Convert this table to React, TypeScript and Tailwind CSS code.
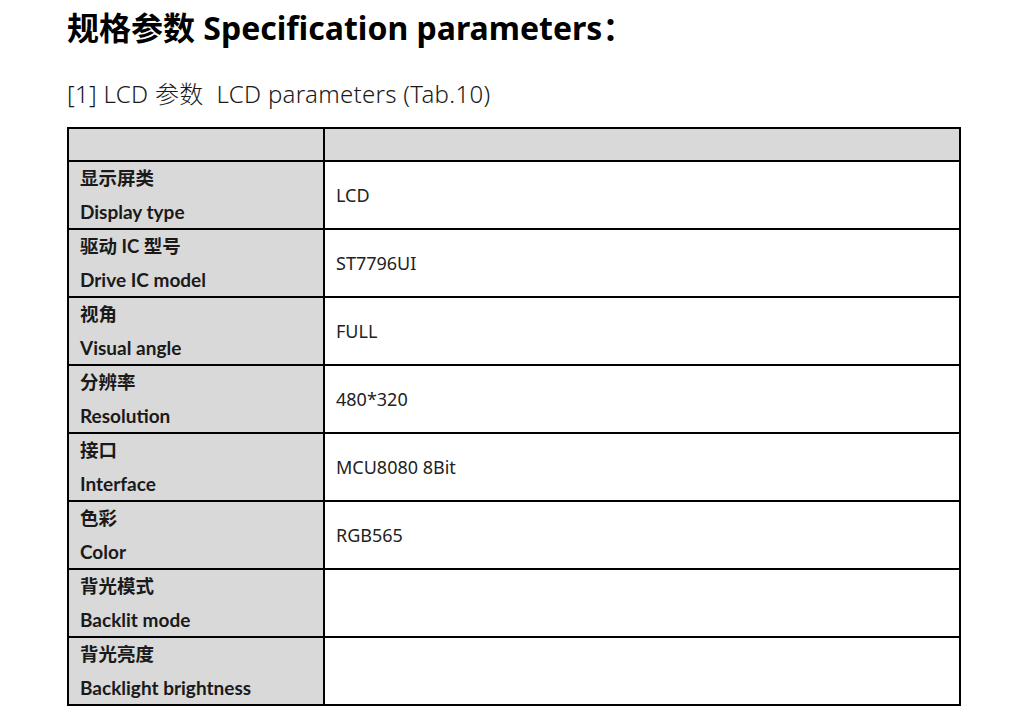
const rows = [
  { zh: "显示屏类", en: "Display type", value: "LCD" },
  { zh: "驱动 IC 型号", en: "Drive IC model", value: "ST7796UI" },
  { zh: "视角", en: "Visual angle", value: "FULL" },
  { zh: "分辨率", en: "Resolution", value: "480*320" },
  { zh: "接口", en: "Interface", value: "MCU8080 8Bit" },
  { zh: "色彩", en: "Color", value: "RGB565" },
  { zh: "背光模式", en: "Backlit mode", value: "" },
  { zh: "背光亮度", en: "Backlight brightness", value: "" },
]

export default function App() {
  return (
    <div className="min-h-screen bg-white pl-[67px] pt-[6px]" style={{ fontFamily: '"Noto Sans", "Noto Sans CJK SC", sans-serif' }}>
      <h1 className="text-[32px] font-bold leading-[44px] text-black">
        规格参数 Specification parameters：
      </h1>
      <p className="mt-[29px] text-[24px] font-light leading-[30px] tracking-[0.3px] text-[#1a1a1a]">
        [1] LCD 参数&nbsp; LCD parameters (Tab.10)
      </p>
      <table className="mt-[18px] w-[894px] border-collapse border-2 border-black">
        <tbody>
          <tr className="h-[33px]">
            <td className="w-[256px] border-2 border-black bg-[#d9d9d9]"></td>
            <td className="border-2 border-black bg-[#d9d9d9]"></td>
          </tr>
          {rows.map((r) => (
            <tr key={r.en} className="h-[68px]">
              <td
                className="border-2 border-black bg-[#d9d9d9] px-[11px] align-top font-bold leading-[33px] text-[#1a1a1a]"
                style={{ fontFamily: 'Lato, "Noto Sans CJK SC", sans-serif' }}
              >
                <div className="text-[18.5px]">{r.zh}</div>
                <div className="text-[19px]">{r.en}</div>
              </td>
              <td className="border-2 border-black px-[11px] text-[18px] text-[#222]">{r.value}</td>
            </tr>
          ))}
        </tbody>
      </table>
    </div>
  )
}
